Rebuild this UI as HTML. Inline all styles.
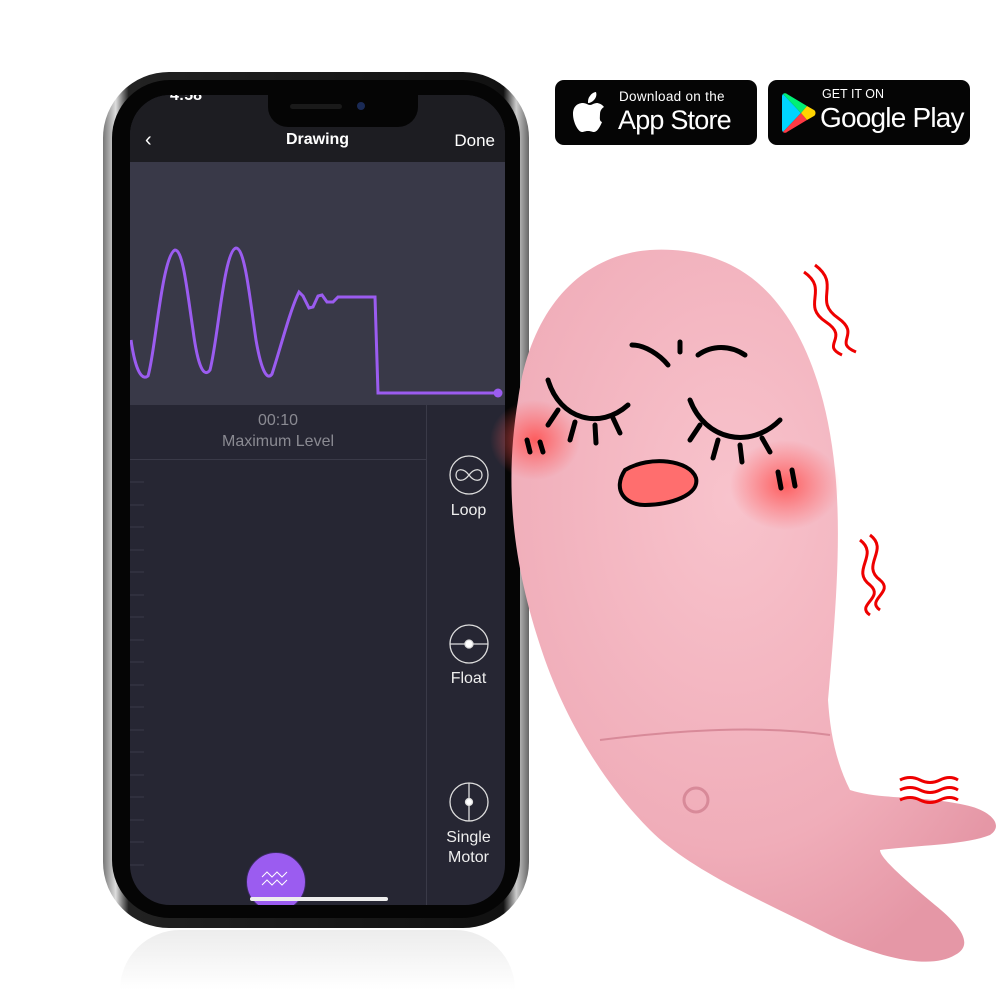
<!DOCTYPE html>
<html><head><meta charset="utf-8"><style>
body{margin:0;width:1000px;height:1000px;background:#fff;position:relative;overflow:hidden;font-family:"Liberation Sans",sans-serif}
.badge{position:absolute;top:80px;height:65px;background:#050505;border-radius:9px;color:#fff;white-space:nowrap}
.abs{position:absolute}
</style></head><body>
<!-- reflection -->
<div class="abs" style="left:120px;top:930px;width:395px;height:60px;border-radius:60px 60px 0 0;background:linear-gradient(#e8e8e8,#fff);opacity:.8"></div>
<!-- phone -->
<div class="abs" style="left:103px;top:72px;width:426px;height:856px;border-radius:66px;background:linear-gradient(90deg,#777,#ddd 3%,#222 6%,#111 94%,#ccc 97%,#666)"></div>
<div class="abs" style="left:112px;top:80px;width:408px;height:838px;border-radius:58px;background:#050505"></div>
<div class="abs" style="left:130px;top:95px;width:375px;height:810px;border-radius:40px;overflow:hidden;background:#262633">
  <div class="abs" style="left:0;top:0;width:375px;height:67px;background:#1d1d22"></div>
  <div class="abs" style="left:40px;top:-8px;color:#fff;font-size:16px;font-weight:bold">4:58</div>
  <div class="abs" style="left:15px;top:34px;color:#fff;font-size:20px">&#8249;</div>
  <div class="abs" style="left:0;width:375px;top:36px;text-align:center;color:#fff;font-size:16px;font-weight:bold">Drawing</div>
  <div class="abs" style="right:10px;top:36px;color:#fff;font-size:17px">Done</div>
  <div class="abs" style="left:0;top:67px;width:375px;height:243px;background:#393948"></div>
  <svg class="abs" style="left:0;top:67px" width="375" height="243" viewBox="130 162 375 243">
    <path d="M131 340 C136 375 143 380 148 376 C155 355 162 255 175 250 C183 250 187 290 193 330 C198 368 204 378 210 370 C218 340 224 250 236 248 C245 248 250 300 256 340 C262 375 268 380 272 374 C280 350 290 310 299 292 L303 296 L309 308 L313 307 L318 296 L322 295 L327 302 L333 302 L338 297 L375 297 L378 393 L498 393" fill="none" stroke="#9b5cf0" stroke-width="3"/>
    <circle cx="498" cy="393" r="4.5" fill="#9b5cf0"/>
  </svg>
  <div class="abs" style="left:0;top:310px;width:296px;height:55px;border-bottom:1px solid #3a3a48;text-align:center;color:#8a8a92;font-size:16px;line-height:21px;padding-top:5px;box-sizing:border-box">00:10<br>Maximum Level</div>
  <div class="abs" style="left:296px;top:310px;width:1px;height:500px;background:#3a3a48"></div>
  <svg class="abs" style="left:0;top:365px" width="20" height="420"><g stroke="#3a3a48"><path d="M0 22H14M0 45H14M0 67H14M0 90H14M0 112H14M0 135H14M0 157H14M0 180H14M0 202H14M0 225H14M0 247H14M0 270H14M0 292H14M0 315H14M0 337H14M0 360H14M0 382H14M0 405H14"/></g></svg>
  <svg class="abs" style="left:318px;top:360px" width="44" height="460" fill="none" stroke="#ddd" stroke-width="1.3">
    <circle cx="21" cy="20" r="19"/><path d="M21 20 C15 12 8 14 8 20 C8 26 15 28 21 20 C27 12 34 14 34 20 C34 26 27 28 21 20Z"/>
    <circle cx="21" cy="189" r="19"/><path d="M2 189H40"/><circle cx="21" cy="189" r="4" fill="#fff"/>
    <circle cx="21" cy="347" r="19"/><path d="M21 328V366"/><circle cx="21" cy="347" r="3.5" fill="#fff"/>
  </svg>
  <div class="abs" style="left:306px;top:407px;width:65px;text-align:center;color:#eee;font-size:16px">Loop</div>
  <div class="abs" style="left:306px;top:575px;width:65px;text-align:center;color:#eee;font-size:16px">Float</div>
  <div class="abs" style="left:306px;top:733px;width:65px;text-align:center;color:#eee;font-size:16px;line-height:20px">Single<br>Motor</div>
  <div class="abs" style="left:116px;top:757px;width:58px;height:58px;border-radius:50%;background:#9b5cf0;border:1px solid #3a2a60"></div>
  <svg class="abs" style="left:130px;top:775px" width="30" height="20" fill="none" stroke="#fff" stroke-width="1"><path d="M2 7L7 2L12 7L17 2L22 7L27 2M2 15L7 10L12 15L17 10L22 15L27 10"/></svg>
  <div class="abs" style="left:120px;top:802px;width:138px;height:4px;border-radius:2px;background:#eee"></div>
</div>
<div class="abs" style="left:268px;top:95px;width:150px;height:32px;background:#050505;border-radius:0 0 20px 20px"></div>
<div class="abs" style="left:290px;top:104px;width:52px;height:5px;border-radius:3px;background:#1a1a1a"></div>
<div class="abs" style="left:357px;top:102px;width:8px;height:8px;border-radius:50%;background:#1a2a55"></div>
<!-- badges -->
<div class="badge" style="left:555px;width:202px">
  <svg class="abs" style="left:16px;top:12px" width="36" height="42" viewBox="0 0 36 42"><path fill="#fff" d="M29 22c0-5 4-7 4-7-2-3-6-4-7-4-3 0-5 2-7 2s-4-2-7-2C7 11 2 14 2 22c0 8 5 18 9 18 2 0 3-1 6-1s4 1 6 1c3 0 6-5 8-10-3-1-2-5-2-8zM23 8c2-2 3-5 2-8-2 0-5 2-6 4-2 2-2 5-2 7 2 0 4-1 6-3z"/></svg>
  <div class="abs" style="left:64px;top:9px;font-size:13.5px;letter-spacing:.3px">Download on the</div>
  <div class="abs" style="left:63px;top:25px;font-size:27px;letter-spacing:-.8px">App Store</div>
</div>
<div class="badge" style="left:768px;width:202px">
  <svg class="abs" style="left:13px;top:13px" width="36" height="40" viewBox="0 0 36 40"><path fill="#00d4ff" d="M2 1L20 20L2 39C1 38 1 37 1 36V4C1 3 1 2 2 1z"/><path fill="#00f076" d="M2 1C3 0 5 0 6 1L26 13L20 20z"/><path fill="#ff3a44" d="M2 39C3 40 5 40 6 39L26 27L20 20z"/><path fill="#ffd500" d="M26 13L33 17C35 18 35 22 33 23L26 27L20 20z"/></svg>
  <div class="abs" style="left:54px;top:7px;font-size:12.5px">GET IT ON</div>
  <div class="abs" style="left:52px;top:22px;font-size:28px;letter-spacing:-.8px">Google Play</div>
</div>
<!-- whale -->
<svg class="abs" style="left:0;top:0" width="1000" height="1000">
  <defs>
    <radialGradient id="g" cx="45%" cy="35%" r="70%"><stop offset="0" stop-color="#f8c3cc"/><stop offset=".7" stop-color="#f0adb9"/><stop offset="1" stop-color="#e597a6"/></radialGradient>
    <radialGradient id="b"><stop offset="0" stop-color="#ff4d4d" stop-opacity=".85"/><stop offset="1" stop-color="#ff5a5a" stop-opacity="0"/></radialGradient>
  </defs>
  <path fill="url(#g)" d="M650 250 C580 255 530 310 518 400 C505 480 510 560 545 660 C570 730 610 790 650 830 C690 870 760 900 830 935 C880 958 930 970 955 955 C975 945 960 925 935 905 C905 880 880 858 880 850 C920 845 965 845 990 835 C1005 825 990 810 965 805 C920 795 880 800 850 790 C835 760 830 730 828 700 C835 620 842 540 835 470 C825 370 790 300 740 270 C715 255 685 248 650 250Z"/>
  <path d="M600 740 C680 730 760 725 830 735" fill="none" stroke="#d88a99" stroke-width="2"/>
  <circle cx="696" cy="800" r="12" fill="none" stroke="#d88a99" stroke-width="3"/>
  <ellipse cx="535" cy="440" rx="45" ry="40" fill="url(#b)"/>
  <ellipse cx="785" cy="485" rx="55" ry="45" fill="url(#b)"/>
  <g fill="none" stroke="#000" stroke-width="5" stroke-linecap="round">
    <path d="M548 380 C560 420 600 430 628 405"/>
    <path d="M558 410L548 425M575 422L570 440M595 425L596 443M613 418L620 433"/>
    <path d="M690 400 C705 440 750 450 780 420"/>
    <path d="M700 425L690 440M718 440L713 458M740 445L742 462M762 438L770 452"/>
    <path d="M632 345 C645 345 660 355 668 365"/>
    <path d="M698 355 C712 345 730 345 745 355"/>
    <path d="M680 342L680 352"/>
    <path d="M527 440L530 452M540 442L543 452M778 472L781 488M792 470L795 486"/>
  </g>
  <path d="M625 470 C650 455 690 460 696 478 C700 495 670 505 645 505 C625 505 612 490 625 470Z" fill="#ff6e6e" stroke="#000" stroke-width="4"/>
  <g fill="none" stroke="#e00" stroke-width="3">
    <path d="M804 272 C830 290 800 305 826 322 C850 338 820 345 842 355"/>
    <path d="M815 265 C842 285 812 300 838 318 C862 335 832 342 856 352"/>
    <path d="M860 540 C880 555 850 570 870 585 C885 598 855 605 870 615"/>
    <path d="M870 535 C890 550 860 565 880 580 C895 592 865 600 880 610"/>
    <path d="M900 780 Q910 775 920 780 T940 780 T958 780"/><path d="M900 790 Q910 785 920 790 T940 790 T958 790"/><path d="M900 800 Q910 795 920 800 T940 800 T958 800"/>
  </g>
</svg>
</body></html>
